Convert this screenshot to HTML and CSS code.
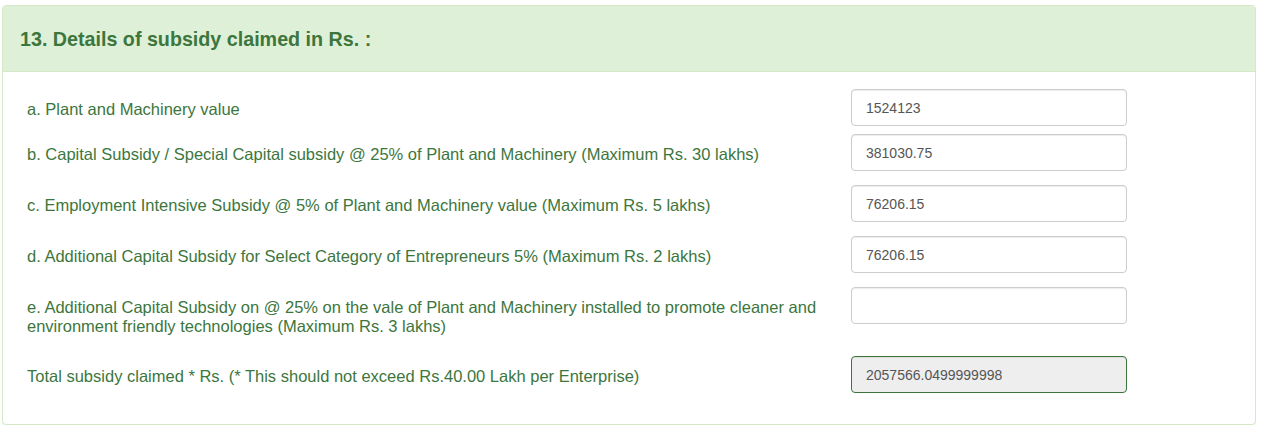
FILE: index.html
```html
<!DOCTYPE html>
<html>
<head>
<meta charset="utf-8">
<link rel="stylesheet" href="styles.css">
</head>
<body>
<div class="panel">
  <div class="panel-heading">13. Details of subsidy claimed in Rs. :</div>
  <div class="panel-body">
    <div class="row row-a">
      <label class="lbl">a. Plant and Machinery value</label>
      <input class="field" type="text" value="1524123">
    </div>
    <div class="row row-b">
      <label class="lbl">b. Capital Subsidy / Special Capital subsidy @ 25% of Plant and Machinery (Maximum Rs. 30 lakhs)</label>
      <input class="field" type="text" value="381030.75">
    </div>
    <div class="row row-c">
      <label class="lbl">c. Employment Intensive Subsidy @ 5% of Plant and Machinery value (Maximum Rs. 5 lakhs)</label>
      <input class="field" type="text" value="76206.15">
    </div>
    <div class="row row-d">
      <label class="lbl">d. Additional Capital Subsidy for Select Category of Entrepreneurs 5% (Maximum Rs. 2 lakhs)</label>
      <input class="field" type="text" value="76206.15">
    </div>
    <div class="row row-e">
      <label class="lbl">e. Additional Capital Subsidy on @ 25% on the vale of Plant and Machinery installed to promote cleaner and environment friendly technologies (Maximum Rs. 3 lakhs)</label>
      <input class="field" type="text" value="">
    </div>
    <div class="row row-total">
      <label class="lbl">Total subsidy claimed * Rs. (* This should not exceed Rs.40.00 Lakh per Enterprise)</label>
      <input class="field field-total" type="text" value="2057566.0499999998" readonly>
    </div>
  </div>
</div>
</body>
</html>
```
FILE: styles.css
```css
html, body {
  margin: 0;
  padding: 0;
  background: #fff;
  font-family: "Liberation Sans", Arial, sans-serif;
}
.panel {
  margin: 5px 0 0 2px;
  width: 1254px;
  box-sizing: border-box;
  border: 1px solid #d6e9c6;
  border-radius: 4px;
  background: #fff;
  box-shadow: 0 1px 1px rgba(0,0,0,0.05);
}
.panel-heading {
  background: #dff0d8;
  color: #3c763d;
  border-bottom: 1px solid #d6e9c6;
  border-radius: 3px 3px 0 0;
  height: 66px;
  box-sizing: border-box;
  padding: 2px 17px 0 17px;
  display: flex;
  align-items: center;
  font-size: 19.7px;
  font-weight: bold;
}
.panel-body {
  padding: 17px 24px 31px 24px;
}
.row {
  display: grid;
  grid-template-columns: 824px 276px;
  align-items: start;
}
.row-b { margin-top: 8px; }
.row-c { margin-top: 14px; }
.row-d { margin-top: 14px; }
.row-e { margin-top: 14px; }
.row-total { margin-top: 20px; }
.lbl {
  color: #3c763d;
  font-size: 16.5px;
  line-height: 19px;
  padding-top: 11px;
  padding-right: 20px;
}
.field {
  width: 276px;
  height: 37px;
  box-sizing: border-box;
  border: 1px solid #ccc;
  border-radius: 4px;
  padding: 6px 14px;
  font-family: "Liberation Sans", Arial, sans-serif;
  font-size: 14px;
  color: #555;
  background: #fff;
  box-shadow: inset 0 1px 1px rgba(0,0,0,0.075);
  outline: none;
}
.field-total {
  background: #eee;
  border-color: #3c763d;
}
```
